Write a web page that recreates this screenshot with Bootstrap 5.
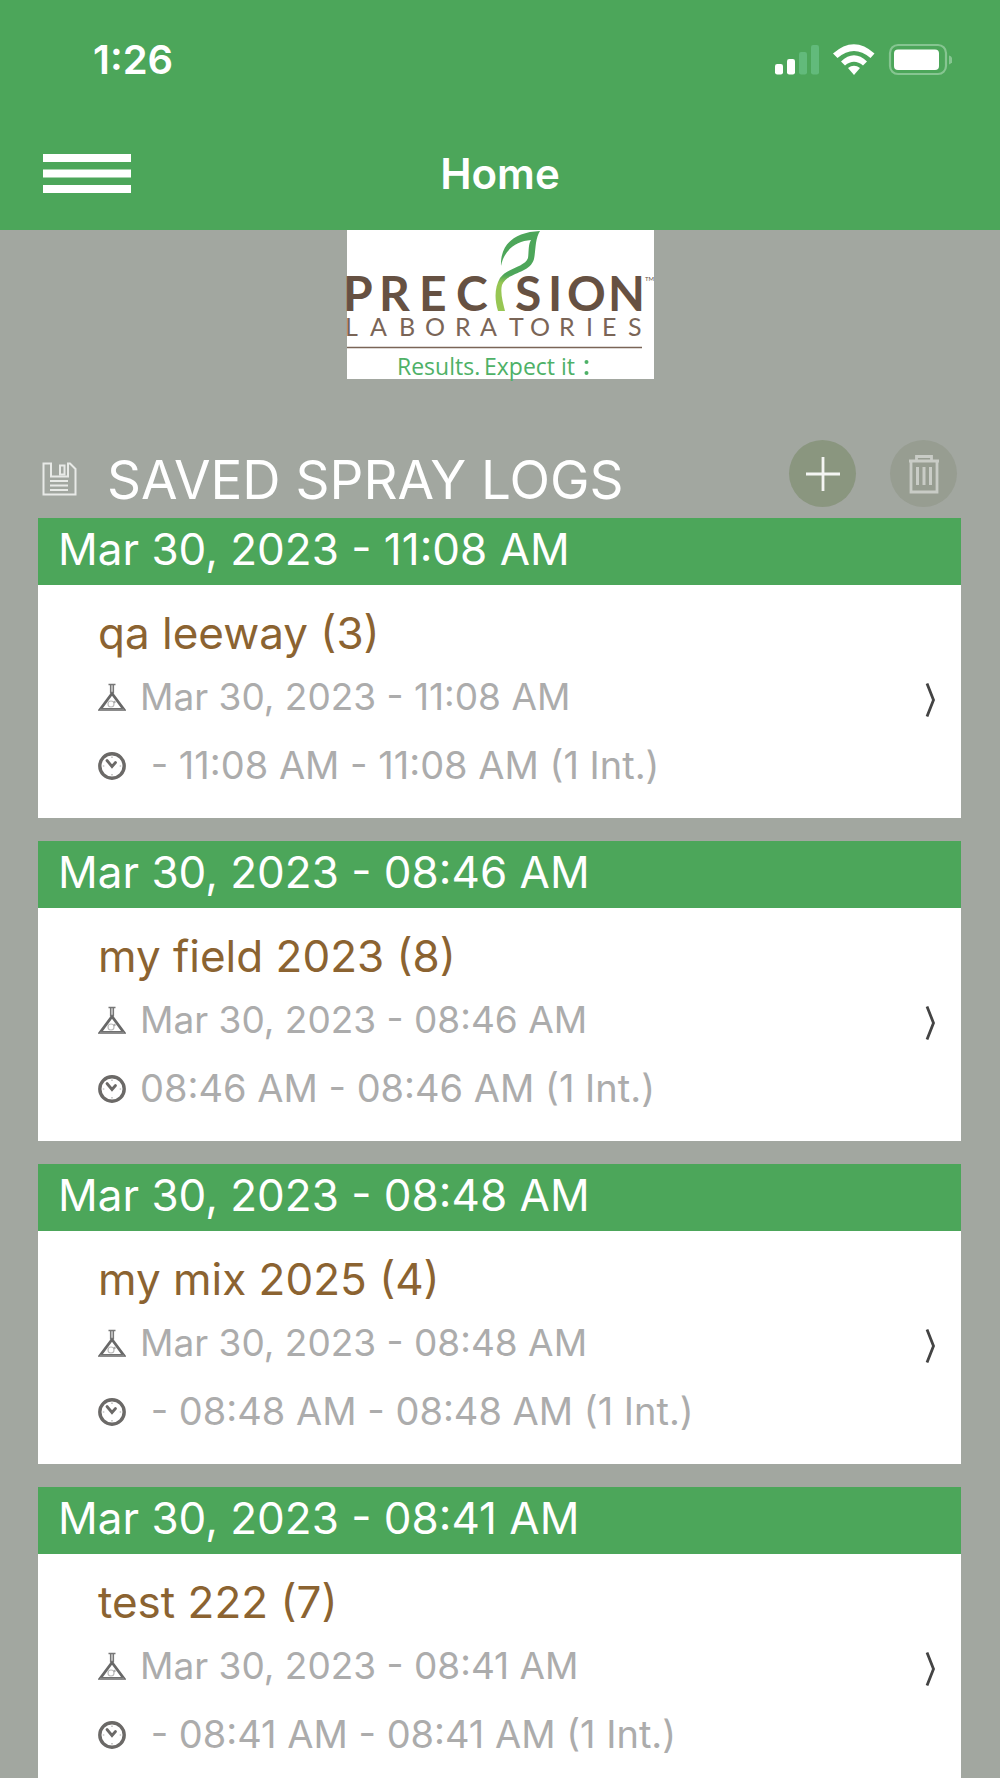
<!DOCTYPE html>
<html lang="en">
<head>
<meta charset="utf-8">
<meta name="viewport" content="width=device-width, initial-scale=1">
<title>Home</title>
<link href="https://cdn.jsdelivr.net/npm/bootstrap@5.3.0/dist/css/bootstrap.min.css" rel="stylesheet">
<style>
  :root { --leaf: #4ca65a; --stone: #a2a7a0; }
  body { background: var(--stone); font-family: Inter, "Liberation Sans", sans-serif; }
  .bg-leaf { background: var(--leaf); }
  .status-row { height: 120px; padding: 0 48px 0 93px; }
  .status-time { font-size: 40px; line-height: 120px; font-weight: 600; }
  .title-row { display: grid; grid-template-columns: 1fr auto 1fr; height: 110px; padding: 0 43px; }
  .page-title { font-size: 42px; line-height: 108px; font-weight: 600; }
  .menu-btn { height: 106px; }
  .logo-block { height: 149px; }
  .section-row { height: 139px; padding: 61px 43px 0 42px; }
  .section-icon { margin-top: 22px; }
  .section-title { font-size: 53px; line-height: 80px; margin-left: 30px; }
  .round-group { gap: 34px; }
  .round-btn { width: 67px; height: 67px; background: #8a967f; }
  .round-btn.is-off { background: #979d91; }
  .log-list { padding: 0 39px 23px 38px; gap: 23px; }
  .log-date { font-size: 44px; line-height: 62px; padding: 0 20px 5px; }
  .log-body { height: 233px; padding: 19px 24px 22px 60px; }
  .log-name { font-size: 44px; line-height: 58px; color: #8b6331; }
  .log-meta { font-size: 37px; line-height: 69px; color: #acacac; gap: 14px; }
  .log-span { font-size: 38px; }
</style>
</head>
<body>
<svg class="d-none" aria-hidden="true">
  <symbol id="flask" viewBox="0 0 28 28">
    <path d="M10.500 1.500h7M12.700 1.500v9M15.300 1.500v9" fill="none" stroke="#777" stroke-width="1.600"/>
    <path d="M14 10.500 2.200 26.300h23.600z" fill="none" stroke="#686868" stroke-width="2.800"/>
    <path d="M2 26.500h24" stroke="#888" stroke-width="1.500"/>
    <circle cx="13" cy="21" r="3" fill="none" stroke="#bbb" stroke-width="1.200"/>
    <circle cx="16.500" cy="19" r="1.200" fill="#aaa"/>
  </symbol>
  <symbol id="clock" viewBox="0 0 28 28">
    <circle cx="14" cy="14" r="12.200" fill="none" stroke="#6b6967" stroke-width="3.400"/>
    <path d="M9 8.500l5 6 3.500-4" fill="none" stroke="#6b6967" stroke-width="2.800" stroke-linecap="round"/>
    <path d="M14 4.500v1.500M14 22v1.500M4.800 14h1.500M21.700 14h1.500" stroke="#aaa" stroke-width="1.200"/>
  </symbol>
  <symbol id="chevron" viewBox="0 0 12 36">
    <path d="M2 1.500 8.500 18 2 34.500" fill="none" stroke="#444" stroke-width="2.800"/>
  </symbol>
</svg>
<div class="vh-100 overflow-hidden">
  <header class="bg-leaf text-white">
    <div class="status-row d-flex align-items-center justify-content-between">
      <span class="status-time">1:26</span>
      <svg width="180" height="34" viewBox="0 0 180 34" fill="#fff" role="img" aria-label="Signal, Wi-Fi and battery">
        <rect x="3" y="21" width="8" height="10.500" rx="2.200"/>
        <rect x="15" y="16" width="8" height="15.500" rx="2.200"/>
        <rect x="27" y="9" width="8" height="22.500" rx="2.200" fill="#62ba7b"/>
        <rect x="39" y="2" width="8" height="29.500" rx="2.200" fill="#62ba7b"/>
        <path d="M61 10.500Q82-8 102.500 10.500L98.500 15Q82 1 65.500 15z"/>
        <path d="M69 18.500Q82 6 95 18.500L91 22.500Q82 15 73 22.500z"/>
        <path d="M76 25Q82 20.500 88 25L82 32z"/>
        <rect x="118" y="2" width="56" height="29" rx="8" fill="none" stroke="#86c591" stroke-width="2.200"/>
        <rect x="122" y="6.500" width="45" height="20.500" rx="4"/>
        <path d="M177 12.500q3.500 1 3.500 4.500t-3.500 4.500z" fill="#86c591"/>
      </svg>
    </div>
    <div class="title-row align-items-start">
      <button type="button" class="menu-btn btn border-0 p-0 d-flex align-items-center" aria-label="Menu">
        <svg width="88" height="39" viewBox="0 0 88 39" fill="#fff"><path d="M0 0h88v8H0zM0 15.500h88v8H0zM0 31h88v8H0z"/></svg>
      </button>
      <h1 class="page-title m-0">Home</h1>
    </div>
  </header>
  <main>
    <div class="logo-block d-flex justify-content-center">
      <svg class="overflow-visible" width="307" height="149" viewBox="0 0 307 149" role="img" aria-label="Precision Laboratories">
        <defs><linearGradient id="stem" x1="0" y1="0" x2="0" y2="1"><stop offset="0" stop-color="#4da65a"/><stop offset=".55" stop-color="#4da65a"/><stop offset=".65" stop-color="#97c653"/><stop offset="1" stop-color="#97c653"/></linearGradient></defs>
        <rect width="307" height="149" fill="#fff"/>
        <g font-family="Lato, sans-serif" fill="#665142">
          <text font-size="48" font-weight="700" y="81" x="-4 32 72 109">PREC</text>
          <text font-size="48" font-weight="700" y="81" x="168 201 220 261">SION</text>
          <text font-size="25" fill="#7a6557" y="106" x="-2 23 52 78 108 133 162 183 212 239 255 281">LABORATORIES</text>
          <text font-size="6" y="51" x="298">TM</text>
        </g>
        <g font-family="Open Sans, sans-serif" font-size="23" fill="#4eb167">
          <text y="145" x="50">Results.</text>
          <text y="145" x="137">Expect it</text>
        </g>
        <circle cx="239.500" cy="132" r="2" fill="#4eb167"/><circle cx="239.500" cy="143" r="2" fill="#4eb167"/>
        <path d="M0 117.500h295" stroke="#7a6557" stroke-width="1.300"/>
        <path d="M154 36C153 14 168 2 193 1C188 9 189 19 187 29C183 44 160 42 155 55C153 63 156 73 158 81H151C147 68 148 57 153 48C160 38 178 37 181 28C182 21 181 15 184 10C169 11 157 20 154 36z" fill="url(#stem)"/>
      </svg>
    </div>
    <div class="section-row d-flex align-items-start">
      <svg class="section-icon" width="35" height="34" viewBox="0 0 35 34" fill="none" stroke="#e8eae7" stroke-width="2" aria-hidden="true">
        <path d="M1.500 1.500H9V14.500H26V1.500h2l5.500 5.500V32.500h-32z"/><path d="M18 3.500h4.500v9H18z"/>
        <path d="M8 19h18M8 23.500h18M8 28h18"/>
      </svg>
      <h2 class="section-title text-white fw-normal mb-0">SAVED SPRAY LOGS</h2>
      <div class="d-flex ms-auto align-items-start round-group">
        <button type="button" class="round-btn btn border-0 rounded-circle p-0" aria-label="Add log">
          <svg width="34" height="34" viewBox="0 0 34 34" stroke="#f4f5f3" stroke-width="2.800"><path d="M17 0v34M0 17h34"/></svg>
        </button>
        <button type="button" class="round-btn is-off btn border-0 rounded-circle p-0" aria-label="Delete logs">
          <svg width="32" height="40" viewBox="0 0 32 40" fill="none" stroke="#c9ccc6" stroke-width="2.800"><path d="M1 7h30M8.500 6V2.500h15V6M3 7v31h26V7"/><path d="M9.500 13v18M16 13v18M22.500 13v18" stroke-width="3"/></svg>
        </button>
      </div>
    </div>
    <ul class="log-list list-unstyled d-flex flex-column mb-0">
      <li class="bg-white">
        <h3 class="log-date bg-leaf text-white fw-normal mb-0">Mar 30, 2023 - 11:08 AM</h3>
        <a href="#log1" class="log-body d-flex text-decoration-none">
          <div class="flex-grow-1">
            <div class="log-name">qa leeway (3)</div>
            <div class="log-meta d-flex align-items-center"><svg width="28" height="28"><use href="#flask"/></svg><span>Mar 30, 2023 - 11:08 AM</span></div>
            <div class="log-meta log-span d-flex align-items-center"><svg width="28" height="28"><use href="#clock"/></svg><span>&nbsp;- 11:08 AM - 11:08 AM (1 Int.)</span></div>
          </div>
          <svg class="align-self-center" width="12" height="36"><use href="#chevron"/></svg>
        </a>
      </li>
      <li class="bg-white">
        <h3 class="log-date bg-leaf text-white fw-normal mb-0">Mar 30, 2023 - 08:46 AM</h3>
        <a href="#log2" class="log-body d-flex text-decoration-none">
          <div class="flex-grow-1">
            <div class="log-name">my field 2023 (8)</div>
            <div class="log-meta d-flex align-items-center"><svg width="28" height="28"><use href="#flask"/></svg><span>Mar 30, 2023 - 08:46 AM</span></div>
            <div class="log-meta log-span d-flex align-items-center"><svg width="28" height="28"><use href="#clock"/></svg><span>08:46 AM - 08:46 AM (1 Int.)</span></div>
          </div>
          <svg class="align-self-center" width="12" height="36"><use href="#chevron"/></svg>
        </a>
      </li>
      <li class="bg-white">
        <h3 class="log-date bg-leaf text-white fw-normal mb-0">Mar 30, 2023 - 08:48 AM</h3>
        <a href="#log3" class="log-body d-flex text-decoration-none">
          <div class="flex-grow-1">
            <div class="log-name">my mix 2025 (4)</div>
            <div class="log-meta d-flex align-items-center"><svg width="28" height="28"><use href="#flask"/></svg><span>Mar 30, 2023 - 08:48 AM</span></div>
            <div class="log-meta log-span d-flex align-items-center"><svg width="28" height="28"><use href="#clock"/></svg><span>&nbsp;- 08:48 AM - 08:48 AM (1 Int.)</span></div>
          </div>
          <svg class="align-self-center" width="12" height="36"><use href="#chevron"/></svg>
        </a>
      </li>
      <li class="bg-white">
        <h3 class="log-date bg-leaf text-white fw-normal mb-0">Mar 30, 2023 - 08:41 AM</h3>
        <a href="#log4" class="log-body d-flex text-decoration-none">
          <div class="flex-grow-1">
            <div class="log-name">test 222 (7)</div>
            <div class="log-meta d-flex align-items-center"><svg width="28" height="28"><use href="#flask"/></svg><span>Mar 30, 2023 - 08:41 AM</span></div>
            <div class="log-meta log-span d-flex align-items-center"><svg width="28" height="28"><use href="#clock"/></svg><span>&nbsp;- 08:41 AM - 08:41 AM (1 Int.)</span></div>
          </div>
          <svg class="align-self-center" width="12" height="36"><use href="#chevron"/></svg>
        </a>
      </li>
    </ul>
  </main>
</div>
<script src="https://cdn.jsdelivr.net/npm/bootstrap@5.3.0/dist/js/bootstrap.bundle.min.js"></script>
</body>
</html>
